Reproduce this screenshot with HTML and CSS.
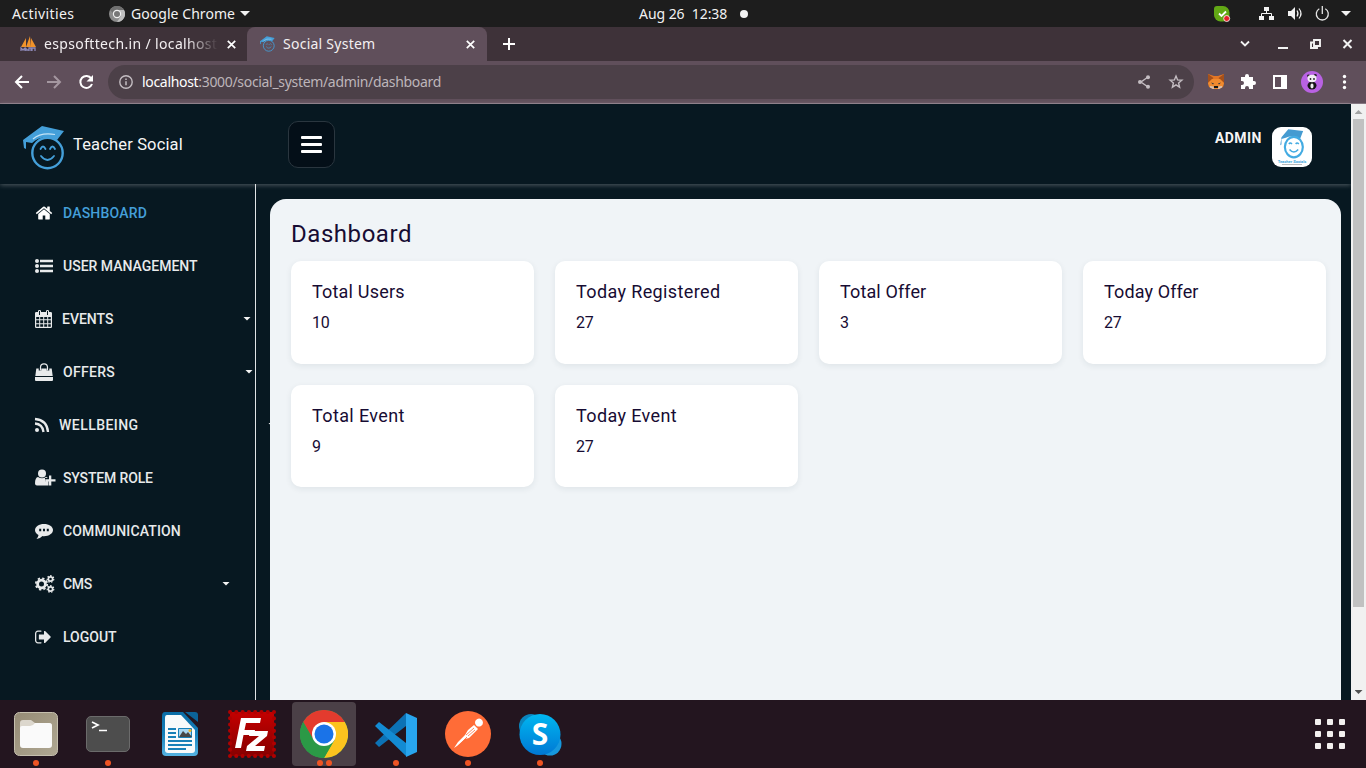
FILE: index.html
```
<!DOCTYPE html>
<html lang="en">
<head>
<meta charset="utf-8">
<title>Social System</title>
<link rel="stylesheet" href="styles.css">
</head>
<body>
<svg class="defs" width="0" height="0">
  <defs>
    <symbol id="grad" viewBox="0 0 42 44">
      <path d="M0 14 19 0l22 5-7 9Q19 8 9 17L3 16v7l-2-1z" fill="#449fd9"/>
      <path d="M10 13Q18 6 32 8.500" fill="none" stroke="#c5e4f6" stroke-width="1.200"/>
      <circle cx="24.500" cy="27" r="15.200" fill="none" stroke="#449fd9" stroke-width="2.400"/>
      <path d="M17.500 23q2.500-5 5 0m4.500 0q2.500-5 5 0M18 30q6.500 8 13 0" fill="none" stroke="#449fd9" stroke-width="1.800" stroke-linecap="round"/>
    </symbol>
    <linearGradient id="gFiles" x2="1" y2="1"><stop stop-color="#958b75"/><stop offset="1" stop-color="#b0a893"/></linearGradient>
    <linearGradient id="gWriter" x2="0" y2="1"><stop stop-color="#0a6ca5"/><stop offset=".5" stop-color="#1681bb"/><stop offset="1" stop-color="#55b3e2"/></linearGradient>
    <linearGradient id="gFz" x2="0" y2="1"><stop stop-color="#c40000"/><stop offset="1" stop-color="#860000"/></linearGradient>
    <linearGradient id="gSky" x2="0" y2="1"><stop stop-color="#00b7f0"/><stop offset="1" stop-color="#0078d4"/></linearGradient>
  </defs>
</svg>

<header class="topbar">
  <span class="t-act">Activities</span>
  <svg class="t-chrome" width="16" height="16"><circle cx="8" cy="8" r="8" fill="#8b8b8b"/><path d="M8 4h7a8 8 0 0 1-7 12l4-6z" fill="#bdbdbd"/><path d="M1 4a8 8 0 0 1 14 0H8a4 4 0 0 0-4 3z" fill="#6f6f6f"/><circle cx="8" cy="8" r="4.200" fill="#f0f0f0"/><circle cx="8" cy="8" r="3" fill="#777"/></svg>
  <span class="t-app">Google Chrome</span>
  <i class="tri"></i>
  <span class="t-date">Aug 26&nbsp; 12:38</span>
  <i class="dot"></i>
  <svg class="t-tray" width="140" height="20">
    <rect x="0" y="1" width="15.500" height="15.500" rx="6.500" fill="#62a815"/><rect x="0" y="1" width="9" height="9" rx="3" fill="#62a815"/>
    <path d="m5 8.500 2.500 2.500L12 6.500" fill="none" stroke="#fff" stroke-width="1.800"/><circle cx="12.700" cy="13.500" r="3" fill="#e5202a" stroke="#fff" stroke-width=".8"/>
    <path d="M50 2h5v4h-5zM45 11h5v4h-5zM55 11h5v4h-5z" fill="#f2f2f2"/><path d="M52.500 6v3m-5 3V8.500h10V12" fill="none" stroke="#f2f2f2"/>
    <path d="M74 6h3l4-4v13l-4-4h-3z" fill="#f2f2f2"/><path d="M83 5.500q2 3 0 6M85 3.500q4 5 0 10" fill="none" stroke="#f2f2f2" stroke-width="1.200"/>
    <path d="M105.300 3.800a6 6 0 1 0 6 0M108.300 1v8" fill="none" stroke="#e5e5e5" stroke-width="1.300"/>
    <path d="M127 6h10l-5 5z" fill="#f2f2f2"/>
  </svg>
</header>

<div class="tabs">
  <div class="tab tab-old">
    <svg width="17" height="16"><path d="M1 11 6 2v9zM6 11l4-11 1 11zM11 11V2l5 9z" fill="#f0932b"/><path d="M1 15v-3l2 2 2-2v3m1-3v2h3v-2m0 3v-3h2v3m1 0v-3h3v3" fill="none" stroke="#8d89b8" stroke-width="1.300"/></svg>
    <span class="tab-t fade">espsofttech.in / localhost</span>
    <svg class="x1" width="9" height="9"><path d="m.8.8 7.400 7.400m0-7.400L.8 8.200" stroke="#fff" stroke-width="1.700"/></svg>
  </div>
  <div class="tab tab-on">
    <svg width="15" height="16"><use href="#grad"/></svg>
    <span class="tab-t">Social System</span>
    <svg class="x2" width="9" height="9"><path d="m.8.8 7.400 7.400m0-7.400L.8 8.200" stroke="#fff" stroke-width="1.700"/></svg>
  </div>
  <svg class="plus" width="12" height="12"><path d="M6 0v12M0 6h12" stroke="#fff" stroke-width="2"/></svg>
  <svg class="winctl" width="116" height="16">
    <path d="m1 5.500 4 4 4-4" fill="none" stroke="#f2f2f2" stroke-width="1.800"/>
    <path d="M38 12h10" stroke="#f2f2f2" stroke-width="2"/>
    <path d="M74 4h6v6h-6zM73 6.500h-2V12h6v-2" fill="none" stroke="#f2f2f2" stroke-width="1.900"/>
    <path d="m103.500 4 8 8m0-8-8 8" stroke="#f2f2f2" stroke-width="2"/>
  </svg>
</div>

<div class="toolbar">
  <svg class="nav" width="80" height="16">
    <path d="M15 8H2m6-6L2 8l6 6" fill="none" stroke="#fff" stroke-width="2"/>
    <path d="M33 8h13m-6-6 6 6-6 6" fill="none" stroke="#a497a0" stroke-width="2"/>
    <path d="M77.300 4.500A6 6 0 1 0 78 10" fill="none" stroke="#fff" stroke-width="2"/><path d="M79 1v6.500h-6.500z" fill="#fff"/>
  </svg>
  <div class="omni">
    <svg width="14" height="14"><circle cx="7" cy="7" r="6.200" fill="none" stroke="#c4bdc2" stroke-width="1.400"/><path d="M7 6.300v4M7 3.500v1.500" stroke="#c4bdc2" stroke-width="1.500"/></svg>
    <span class="url"><b>localhost</b>:3000/social_system/admin/dashboard</span>
    <svg class="share" width="48" height="16"><path d="m11 3-7 5 7 5" fill="none" stroke="#c4bdc2" stroke-width="1.400"/><g fill="#c4bdc2"><circle cx="11" cy="3.300" r="2"/><circle cx="3" cy="8" r="2"/><circle cx="11" cy="12.700" r="2"/></g><path d="m39 2 1.600 3.900 4.300.3-3.300 2.800 1 4.200-3.600-2.300-3.600 2.300 1-4.200-3.300-2.800 4.300-.3z" fill="none" stroke="#c4bdc2" stroke-width="1.400"/></svg>
  </div>
  <svg class="ext" width="146" height="22">
    <path d="m0 3 6 2h4l6-2v8l-1 4-4 3H5l-4-3-1-4z" fill="#e27625"/><path d="m0 3 5.500 4L0 12zM16 3l-5.500 4 5.500 5z" fill="#a4501b"/><path d="m0 12 4-4h8l4 4-1 4-4 2H5l-4-2z" fill="#f08a2e"/><path d="m3 11.500 3 1-1 1zm10 0-3 1 1 1z" fill="#233447"/><path d="M6 15h4v2H6z" fill="#161616"/><path d="m2 15 3.500.5.5 2.500H5l-3-1.500zm12 0-3.500.5-.5 2.500h1l3-1.500z" fill="#d7c1b3"/>
    <path d="M33 6h4V5a2 2 0 0 1 4 0v1h4v4h1a2 2 0 0 1 0 4h-1v4h-4v-1a2 2 0 0 0-4 0v1h-4v-4h1a2 2 0 0 0 0-4h-1z" fill="#fff"/>
    <path d="M65 4h14v14H65zM67 6v10h6V6z" fill="#fff" fill-rule="evenodd"/>
    <circle cx="104" cy="11" r="11" fill="#b962e3"/><ellipse cx="104" cy="14.500" rx="4.500" ry="4" fill="#151515"/><circle cx="100.500" cy="4.800" r="1.400" fill="#222"/><circle cx="107.300" cy="4.300" r="1.400" fill="#222"/><ellipse cx="104" cy="7.500" rx="4.500" ry="3.700" fill="#f2eef4"/><circle cx="102.500" cy="8" r=".9" fill="#222"/><circle cx="106" cy="8" r=".9" fill="#222"/><ellipse cx="104" cy="15" rx="1.600" ry="2.400" fill="#eee"/>
    <g fill="#fff"><circle cx="136.500" cy="5.500" r="1.700"/><circle cx="136.500" cy="11" r="1.700"/><circle cx="136.500" cy="16.500" r="1.700"/></g>
  </svg>
</div>

<div class="viewport">
  <div class="page">
    <div class="head">
      <svg class="logo" width="42" height="44"><use href="#grad"/></svg>
      <span class="brand">Teacher Social</span>
      <button class="burger"><i></i><i></i><i></i></button>
      <span class="admin">ADMIN</span>
      <div class="avatar">
        <svg width="26" height="30" viewBox="0 0 42 48"><path d="M4 13 15 0l24 3-5 13Q21 8 11 14L4 16v9L2 26z" fill="#459bd1"/><ellipse cx="24" cy="29" rx="14.500" ry="16.500" fill="none" stroke="#43abe2" stroke-width="3.500"/><path d="M16 24q2-3 5 0m6 0q2-3 5 0M17 33q7 8 14 0" fill="none" stroke="#43abe2" stroke-width="2.500"/></svg>
        <span class="av1">Teacher Socials</span><i class="av2"></i>
      </div>
    </div>
    <div class="body">
      <nav class="side">
        <a class="item on"><svg width="18" height="18" viewBox="0 0 1792 1792"><path d="M1472 992v480q0 26-19 45t-45 19h-384v-384h-256v384h-384q-26 0-45-19t-19-45v-480q0-1 .5-3t.5-3l575-474 575 474q1 2 1 6zm223-69l-62 74q-8 9-21 11h-3q-13 0-21-7l-692-577-692 577q-12 8-24 7-13-2-21-11l-62-74q-8-10-7-23.500t11-21.500l719-599q32-26 76-26t76 26l244 204v-195q0-14 9-23t23-9h192q14 0 23 9t9 23v408l219 182q10 8 11 21.500t-7 23.500z"/></svg><span class="w-dash">DASHBOARD</span></a>
        <a class="item"><svg width="18" height="18"><circle cx="2" cy="4" r="2"/><circle cx="2" cy="9" r="2"/><circle cx="2" cy="14" r="2"/><path d="M5 2.800h13v2.400H5zM5 7.800h13v2.400H5zM5 12.800h13v2.400H5z"/></svg><span>USER MANAGEMENT</span></a>
        <a class="item"><svg width="17" height="18"><path fill-rule="evenodd" d="M1.300 2H3V1q0-1 1.500-1T6 1v1h5V1q0-1 1.500-1T14 1v1h1.700Q17 2 17 3.300v13.400Q17 18 15.700 18H1.300Q0 18 0 16.700V3.300Q0 2 1.300 2zM4 1v4h1V1zm8 0v4h1V1zM1.200 7v2.300h3V7zm4 0v2.300h3V7zm4 0v2.300h3V7zm4 0v2.300h2.600V7zm-12 3.300v2.900h3v-2.900zm4 0v2.900h3v-2.900zm4 0v2.900h3v-2.900zm4 0v2.900h2.600v-2.900zm-12 3.900v2.600h3v-2.600zm4 0v2.600h3v-2.600zm4 0v2.600h3v-2.600zm4 0v2.600h2.600v-2.600z"/></svg><span>EVENTS</span><i class="caret c19"></i></a>
        <a class="item"><svg width="18" height="18"><path d="M1.300 5.500h15.400L17.700 13H.3zM0 14h18v3q0 1-1 1H1q-1 0-1-1z"/><path d="M5 7.500V4.500q0-4 4-4T13 4.500v3" fill="none" stroke="#071821" stroke-width="2.600"/><path d="M5.500 7.500V4.500q0-3.700 3.500-3.700t3.500 3.700v3" fill="none" stroke="#e8eaeb" stroke-width="1.200"/></svg><span class="w-off">OFFERS</span><i class="caret c17"></i></a>
        <a class="item"><svg width="14" height="18"><circle cx="2" cy="14" r="2"/><path d="M0 7.500q7.500.5 8.500 8.500M0 3q12 1 13 13" fill="none" stroke="#e8eaeb" stroke-width="2.300"/></svg><span class="w-well">WELLBEING</span><i class="caret c0"></i></a>
        <a class="item"><svg width="21" height="18"><circle cx="7" cy="4.500" r="4"/><path d="M0 14.500q0-6 3-6.500 4 2.500 8 0 1 0 1.800 1H10v3.500h3.500v4H2q-2 0-2-2zM14 6.500h2.300v3.700H20.500v2.300h-4.200v4H14v-4h-3.800v-2.300H14z"/></svg><span class="w-role">SYSTEM ROLE</span></a>
        <a class="item"><svg width="18" height="18"><path fill-rule="evenodd" d="M9 2c5 0 9 2.600 9 6s-4 6.200-9 6.200q-1 0-1.500-.2Q5 16.800 1.500 17q1.700-1.500 2-4Q0 11 0 8.200C0 4.600 4 2 9 2zM4.200 6.800v2.400h2V6.800zm3.800 0v2.400h2V6.800zm3.800 0v2.400h2V6.800z"/></svg><span class="w-comm">COMMUNICATION</span></a>
        <a class="item"><svg width="20" height="18"><g fill="none" stroke="#e8eaeb"><circle cx="6.500" cy="9" r="3.900" stroke-width="2.800"/><circle cx="6.500" cy="9" r="5.700" stroke-width="1.800" stroke-dasharray="2.300 2.177"/><circle cx="15.500" cy="4" r="2.100" stroke-width="1.600"/><circle cx="15.500" cy="4" r="3.300" stroke-width="1.200" stroke-dasharray="1.500 1.456"/><circle cx="15.500" cy="14" r="2.100" stroke-width="1.600"/><circle cx="15.500" cy="14" r="3.300" stroke-width="1.200" stroke-dasharray="1.500 1.456"/></g></svg><span class="w-cms">CMS</span><i class="caret c40"></i></a>
        <a class="item"><svg width="18" height="18" viewBox="64 0 1792 1792"><path d="M704 1440q0 4 1 20t.5 26.500-3 23.500-10 19.500-20.500 6.500h-320q-119 0-203.500-84.500t-84.500-203.500v-704q0-119 84.500-203.500t203.500-84.500h320q13 0 22.500 9.500t9.500 22.500q0 4 1 20t.5 26.500-3 23.500-10 19.500-20.500 6.500h-320q-66 0-113 47t-47 113v704q0 66 47 113t113 47h312l11.500 1 11.500 3 8 5.500 7 9 2 13.500zm928-544q0 26-19 45l-544 544q-19 19-45 19t-45-19-19-45v-288h-448q-26 0-45-19t-19-45v-384q0-26 19-45t45-19h448v-288q0-26 19-45t45-19 45 19l544 544q19 19 19 45z"/></svg><span>LOGOUT</span></a>
      </nav>
      <main class="panel">
        <h1>Dashboard</h1>
        <div class="cards">
          <section class="card"><h2>Total Users</h2><p>10</p></section>
          <section class="card"><h2 class="wide">Today Registered</h2><p>27</p></section>
          <section class="card"><h2 class="tight">Total Offer</h2><p>3</p></section>
          <section class="card"><h2 class="tight">Today Offer</h2><p>27</p></section>
          <section class="card"><h2 class="wide">Total Event</h2><p>9</p></section>
          <section class="card"><h2 class="wide">Today Event</h2><p>27</p></section>
        </div>
      </main>
    </div>
  </div>
  <div class="scroll"><i class="up"></i><i class="thumb"></i><i class="down"></i></div>
</div>

<footer class="dock">
  <div class="app"><svg width="48" height="48"><rect x="2.500" y="2.500" width="43" height="43" rx="5" fill="url(#gFiles)" stroke="#c5bfae"/><path d="M8 13q0-3 3-3h8l4 3h14q3 0 3 3v8H8z" fill="#dcd7cd"/><path d="M8 18q0-2 2-2h8q3 0 5-3h14q3 0 3 3v19q0 3-3 3H11q-3 0-3-3z" fill="#fafafa"/></svg><span class="dots"><i></i></span></div>
  <div class="app"><svg width="48" height="48"><rect x="2.500" y="6.500" width="43" height="35" rx="4.500" fill="#4d4d4d" stroke="#6b6b6b"/><path d="m8 12 6 3-6 3M15 20.500h8" fill="none" stroke="#fff" stroke-width="1.700"/></svg><span class="dots"><i></i></span></div>
  <div class="app"><svg width="48" height="48"><path d="M9 2h18l15 16v24q0 4-4 4H10q-4 0-4-4V6q0-4 3-4z" fill="url(#gWriter)"/><path d="M29 2h10q3 0 3 3v7z" fill="#0c6398"/><path d="M11 5h14l14 15v20q0 3-3 3H12q-3 0-3-3V8q0-3 2-3z" fill="#f8fafb"/><path d="M12 19h8m-8 4h8m-8 4h8m-8 4h24m-24 4h24m-24 4h18" stroke="#1880b8" stroke-width="2"/><path d="M22.500 18.500h13v9h-13z" fill="#a8d7f2" stroke="#1880b8"/><path d="m23 27 4-6 3 3 2-2 4 5z" fill="#474747"/><circle cx="34" cy="20.500" r="1.500" fill="#f7b71d"/></svg></div>
  <div class="app"><svg width="48" height="48"><rect x="2" y="2" width="44" height="44" fill="url(#gFz)"/><rect x="2" y="2" width="44" height="44" fill="none" stroke="#b00000" stroke-width="4" stroke-linecap="round" stroke-dasharray=".1 6.186"/><path d="M7 38 13 8h20l-1 5H18l-1.500 7H27l-1 5H15.500L13 38zM22 21h18l-1 5-12 10h10l-1 5H18l1-5 12-10H21z" fill="#fff"/></svg></div>
  <div class="app active"><svg width="48" height="48" viewBox="-24 -24 48 48"><circle r="24" fill="#34a853"/><path d="M-20.800-12A24 24 0 0 1 20.800-12L0-12-10.400 6z" fill="#e33b2e"/><path d="M20.800-12A24 24 0 0 1 0 24L10.400 6 0-12z" fill="#fcc31e"/><path d="M0 24A24 24 0 0 1-20.800-12L-10.400 6 10.400 6z" fill="#2b9946"/><circle r="12" fill="#fff"/><circle r="9.500" fill="#1a73e8"/></svg><span class="dots"><i></i><i></i></span></div>
  <div class="app"><svg width="48" height="48"><path d="m3 33 4 4L34 16V3z" fill="#0c72b5"/><path d="m3 16 4-4 27 21v13z" fill="#138bd3"/><path d="m34 3 11 5v34l-11 5z" fill="#28a5ee"/></svg><span class="dots"><i></i></span></div>
  <div class="app"><svg width="48" height="48"><circle cx="24" cy="24" r="23" fill="#ff6c37"/><path d="M31 12a4 4 0 1 1 6 4 4 4 0 0 1-6-4zM30 15l4 4-9 9-4 1-8 7-3 2 4-6 7-7 3-5z" fill="#fff"/><path d="m22 25 8-7M24 26l7-6M15 35l8-8" stroke="#ff6c37" stroke-width=".8"/></svg><span class="dots"><i></i></span></div>
  <div class="app"><svg width="48" height="48"><circle cx="15" cy="16" r="12" fill="#0a84bd"/><circle cx="34" cy="34" r="11.500" fill="#1698dd"/><circle cx="24" cy="24.500" r="20.500" fill="url(#gSky)"/></svg><b class="sk">S</b><span class="dots"><i></i></span></div>
  <div class="grid9"><i></i><i></i><i></i><i></i><i></i><i></i><i></i><i></i><i></i></div>
</footer>
</body>
</html>
```
FILE: styles.css
```
* { box-sizing: border-box; }
body { margin: 0; width: 1366px; height: 768px; overflow: hidden; display: flex; flex-direction: column; font-family: "Noto Sans", sans-serif; }
svg { display: block; flex: none; }
i { display: block; flex: none; }
span { white-space: nowrap; flex: none; }
.defs { position: absolute; }

.topbar { height: 27px; flex: none; background: #1d1d1d; color: #f2f2f2; display: flex; align-items: center; font-size: 14px; padding-left: 12px; }
.topbar span { padding-bottom: 1px; }
.t-act { width: 97px; letter-spacing: .4px; }
.t-app { margin-left: 6px; width: 105px; letter-spacing: .05px; }
.tri { width: 10px; height: 5px; margin-left: 4px; background: #f2f2f2; clip-path: polygon(0 0, 100% 0, 50% 100%); }
.t-date { margin-left: 389px; width: 101px; letter-spacing: -.05px; }
.dot { width: 8px; height: 8px; border-radius: 50%; background: #f2f2f2; }
.t-tray { margin-left: auto; margin-right: 12px; margin-top: 3px; }

.tabs { height: 34px; flex: none; background: #3e3239; display: flex; align-items: center; color: #f3eff1; font-size: 14px; }
.tab { display: flex; align-items: center; height: 34px; }
.tab-old { width: 247px; padding-left: 20px; }
.tab-on { width: 240px; padding-left: 13px; background: #604f5b; border-radius: 8px 8px 0 0; }
.tab-t { margin-left: 7px; letter-spacing: .35px; padding-bottom: 2px; }
.tab-on .tab-t { margin-left: 8px; letter-spacing: .25px; }
.fade { width: 174px; overflow: hidden; mask-image: linear-gradient(90deg, #000 82%, transparent); }
.x1 { margin-left: 9px; }
.x2 { margin-left: auto; margin-right: 12px; }
.plus { margin-left: 16px; }
.winctl { margin-left: auto; margin-right: 10px; }

.toolbar { height: 43px; flex: none; background: #604f5b; border-bottom: 1px solid #847681; display: flex; align-items: center; }
.nav { margin-left: 14px; }
.omni { margin-left: 14px; width: 1086px; height: 34px; border-radius: 17px; background: #4c4048; display: flex; align-items: center; padding-left: 11px; }
.url { margin-left: 9px; font-size: 14px; color: #bdb5ba; letter-spacing: -.32px; padding-bottom: 2px; }
.url b { font-weight: 400; color: #fff; }
.share { margin-left: auto; margin-right: 9px; }
.ext { margin-left: 14px; }

.viewport { height: 596px; flex: none; display: flex; background: #071821; }
.page { width: 1351px; display: flex; flex-direction: column; font-family: Roboto, sans-serif; }
.head { height: 80px; flex: none; display: flex; align-items: flex-start; color: #f5f5f5; box-shadow: 0 1px 5px rgba(255, 255, 255, .3); }
.logo { margin: 22px 0 0 23px; }
.brand { margin: 29px 0 0 8px; width: 215px; font-size: 16.500px; line-height: 23px; letter-spacing: .15px; font-weight: 400; }
.burger { width: 47px; height: 47px; margin: 17px 0 0; padding: 0 12px; background: #040f18; border: 1px solid #2a363f; border-radius: 10px; display: flex; flex-direction: column; justify-content: center; gap: 4px; }
.burger i { height: 3px; width: 21px; border-radius: 1px; background: #fff; }
.admin { margin: 25px 0 0 auto; width: 57px; font-size: 14px; line-height: 19px; font-weight: 700; letter-spacing: .4px; }
.avatar { width: 40px; height: 40px; margin: 23px 39px 0 0; border-radius: 9px; background: #fff; display: flex; flex-direction: column; align-items: center; padding-top: 2px; }
.av1 { font-size: 4px; line-height: 5px; font-weight: 700; color: #3aa5dc; }
.av2 { width: 20px; height: 1px; background: #b8b8b8; }
.body { display: flex; flex: 1; min-height: 0; }
.side { width: 270px; flex: none; padding-top: 2px; overflow: hidden; background: linear-gradient(90deg, transparent 255px, #dfe3e5 255px, #dfe3e5 256px, transparent 256px); }
.item { height: 53px; padding-left: 35px; display: flex; align-items: center; gap: 10px; color: #e8eaeb; fill: #e8eaeb; font-size: 14px; font-weight: 500; }
.item svg { overflow: visible; }
.item svg[width="20"] { margin-right: -2px; }
.item svg[width="21"] { margin-right: -3px; }
.item.on { color: #449fd9; fill: #fff; }
.w-dash { letter-spacing: .2px; }
.w-off { letter-spacing: .3px; }
.w-well { letter-spacing: .45px; }
.w-role { letter-spacing: -.15px; }
.w-comm { letter-spacing: .15px; }
.w-cms { letter-spacing: -.3px; }
.caret { width: 8px; height: 4px; margin-left: auto; background: #f4f4f4; clip-path: polygon(0 0, 100% 0, 50% 100%); }
.c19 { margin-right: 19px; }
.c17 { margin-right: 17px; }
.c0 { margin-right: -6px; }
.c40 { margin-right: 40px; }
.panel { width: 1071px; margin-top: 15px; padding: 20px 15px 0 21px; background: #f0f4f7; border-radius: 16px 16px 0 0; color: #170c33; }
h1 { margin: 0 0 12px; font-size: 24px; line-height: 30px; font-weight: 400; letter-spacing: .55px; }
.cards { display: grid; grid-template-columns: repeat(4, 243px); grid-template-rows: 103px 102px; gap: 21px; }
.card { background: #fff; border-radius: 10px; padding: 19px 21px; box-shadow: 0 2px 6px rgba(30, 50, 70, .08); }
h2 { margin: 0 0 9px; font-size: 18px; line-height: 23px; font-weight: 400; letter-spacing: .2px; }
h2.wide { letter-spacing: .38px; }
h2.tight { letter-spacing: .12px; }
p { margin: 0; font-size: 16px; line-height: 22px; letter-spacing: -.3px; }
.scroll { width: 15px; background: #f1f1f1; display: flex; flex-direction: column; align-items: center; }
.up { width: 8px; height: 4px; margin: 6px 0 5px; background: #a3a3a3; clip-path: polygon(50% 0, 100% 100%, 0 100%); }
.thumb { width: 11px; height: 488px; background: #c1c1c1; }
.down { width: 8px; height: 4px; margin-top: auto; margin-bottom: 6px; background: #505050; clip-path: polygon(0 0, 100% 0, 50% 100%); }

.dock { height: 68px; flex: none; background: #23151f; display: flex; align-items: center; gap: 8px; padding-left: 4px; }
.app { width: 64px; height: 64px; border-radius: 4px; padding: 8px 8px 0; position: relative; }
.active { background: #4b4047; }
.dots { position: absolute; bottom: 0; left: 0; width: 64px; display: flex; justify-content: center; gap: 3px; }
.dots i { width: 6px; height: 6px; border-radius: 50%; background: #ee5423; }
.sk { position: absolute; left: 0; top: 10px; width: 64px; text-align: center; font: 700 30px/44px "Noto Sans", sans-serif; color: #fff; }
.grid9 { margin-left: auto; margin-right: 21px; display: grid; grid-template-columns: repeat(3, 6px); gap: 6px; }
.grid9 i { width: 6px; height: 6px; border-radius: 1px; background: #f3f0ef; }
```
